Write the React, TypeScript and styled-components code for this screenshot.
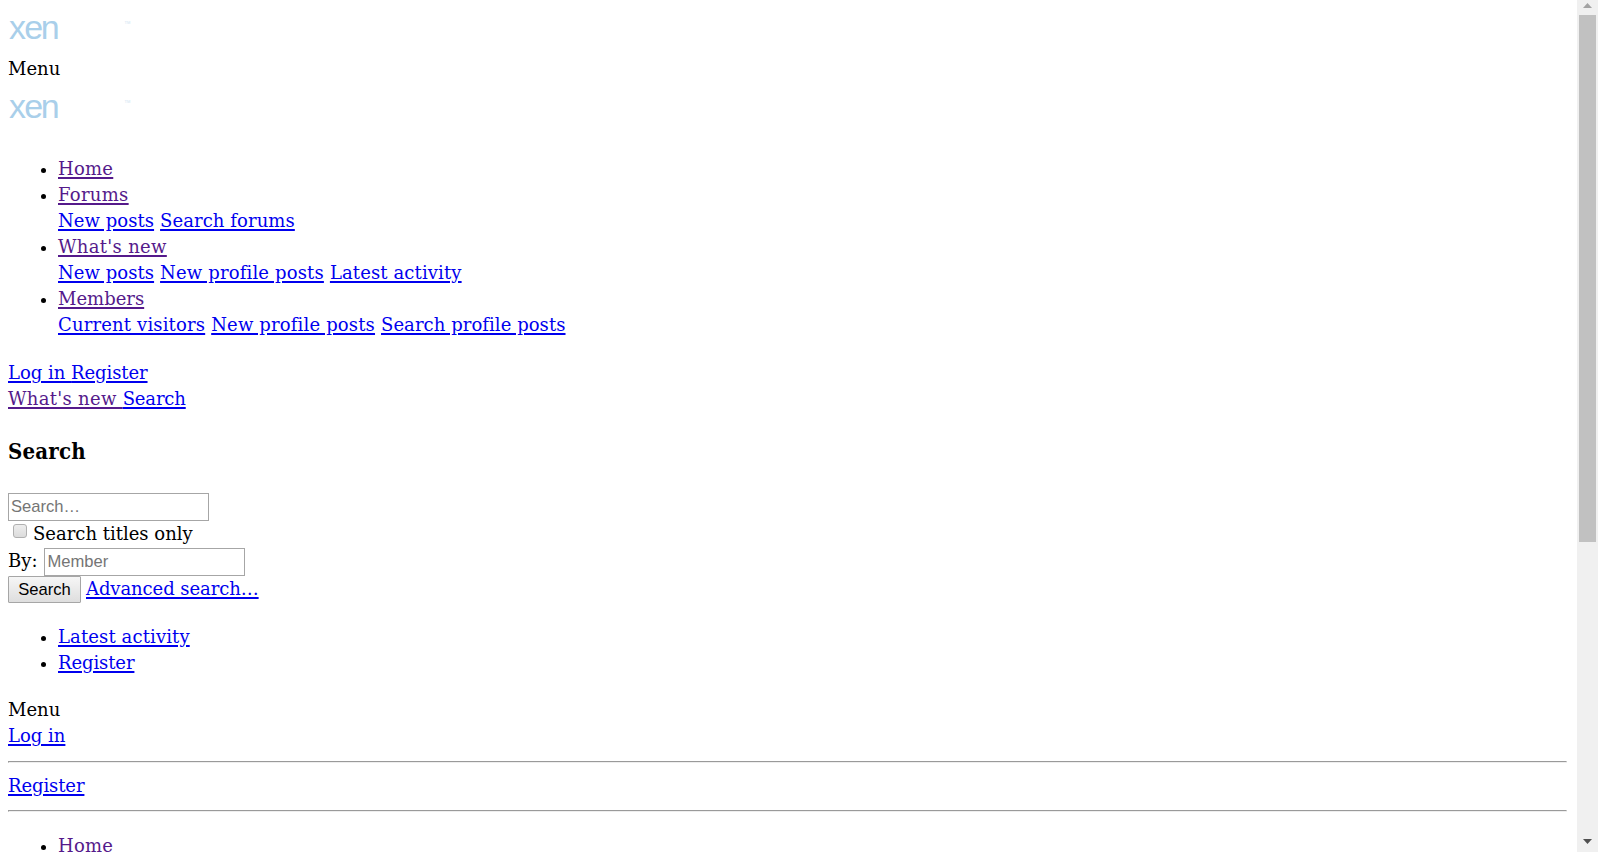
import styled, {createGlobalStyle} from "styled-components";

interface ILink {
    text: string
    visited?: boolean
    tracking?: number
}

const navItems: { title: ILink, links: ILink[] }[] = [
    {title: {text: 'Home', visited: true, tracking: 0.25}, links: []},
    {
        title: {text: 'Forums', visited: true, tracking: 0.3},
        links: [{text: 'New posts', tracking: 0.05}, {text: 'Search forums', tracking: 0.08}]
    },
    {
        title: {text: "What's new", visited: true, tracking: 0.32},
        links: [
            {text: 'New posts', tracking: 0.05},
            {text: 'New profile posts', tracking: 0.16},
            {text: 'Latest activity', tracking: 0.12}
        ]
    },
    {
        title: {text: 'Members', visited: true},
        links: [
            {text: 'Current visitors', tracking: 0.16},
            {text: 'New profile posts', tracking: 0.16},
            {text: 'Search profile posts', tracking: 0.06}
        ]
    },
]

const Link = ({text, visited, tracking}: ILink) =>
    <SLink href={'#'} $visited={visited} $tracking={tracking}>{text}</SLink>

const Logo = () => <SLogo viewBox={'0 0 130 44'}>
    <text x={'1 16.2 32.8'} y={31} fontSize={34}>xen</text>
    <text x={116.5} y={16} fontSize={4} opacity={0.6}>TM</text>
</SLogo>

const App = () => {
    return <SPage>
        <GlobalStyle/>
        <SContent>
            <SLogoBox $height={48}><Logo/></SLogoBox>
            <SLine>Menu</SLine>
            <SLogoBox $height={54} $top={5}><Logo/></SLogoBox>

            <SList $top={20} $bottom={22}>
                {navItems.map(({title, links}) => <SItem key={title.text}>
                    <Link {...title}/>
                    {links.length > 0 && <SLine>
                        {links.map(link => <Link key={link.text} {...link}/>)}
                    </SLine>}
                </SItem>)}
            </SList>

            <SLine $tight><Link text={'Log in\u00a0'}/><Link text={'Register'} tracking={-0.1}/></SLine>
            <SLine $tight>
                <Link text={"What's new\u00a0"} visited tracking={0.3}/>
                <Link text={'Search'} tracking={-0.15}/>
            </SLine>

            <STitle>Search</STitle>
            <SInput placeholder={'Search…'}/>
            <SCheckRow><SCheckbox/>Search titles only</SCheckRow>
            <SFormRow $gap={7}>By:<SInput placeholder={'Member'}/></SFormRow>
            <SFormRow $gap={5}><SButton>Search</SButton><Link text={'Advanced search…'} tracking={-0.08}/></SFormRow>

            <SList $top={20} $bottom={21}>
                <SItem><Link text={'Latest activity'} tracking={0.12}/></SItem>
                <SItem><Link text={'Register'} tracking={-0.1}/></SItem>
            </SList>

            <SLine>Menu</SLine>
            <SLine><Link text={'Log in'}/></SLine>
            <SRule $top={12} $bottom={10}/>
            <SLine><Link text={'Register'} tracking={-0.1}/></SLine>
            <SRule $top={11} $bottom={11}/>
            <SList $top={21} $bottom={0}>
                <SItem><Link text={'Home'} visited tracking={0.25}/></SItem>
            </SList>
        </SContent>
        <SScrollbar>
            <SArrow viewBox={'0 0 9 5'} $color={'#a3a3a3'}><path d={'M0 5L4.5 0L9 5Z'}/></SArrow>
            <SThumb/>
            <SArrow viewBox={'0 0 9 5'} $color={'#505050'}><path d={'M0 0L4.5 5L9 0Z'}/></SArrow>
        </SScrollbar>
    </SPage>
}

const GlobalStyle = createGlobalStyle`
  * {
    box-sizing: border-box;
  }

  body {
    margin: 0;
    overflow: hidden;
    background-color: white;
  }
`

const SPage = styled.main`
  display: flex;
  height: 852px;
  overflow: hidden;
  color: black;
  font-family: 'DejaVu Serif', serif;
  font-size: 18px;
  line-height: 26px;
`

const SContent = styled.section`
  flex: 1;
  padding: 8px 10px 0 8px;
`

const SLogoBox = styled.div<{ $height: number, $top?: number }>`
  height: ${({$height}) => $height}px;
  padding-top: ${({$top = 0}) => $top}px;
`

const SLogo = styled.svg`
  display: block;
  width: 130px;
  height: 44px;
  fill: #a9cfea;
  font-family: 'Liberation Sans', sans-serif;
`

const SLine = styled.div<{ $tight?: boolean }>`
  display: flex;
  gap: ${({$tight}) => $tight ? 0 : 6}px;
  height: 26px;
  white-space: nowrap;
`

const SLink = styled.a<{ $visited?: boolean, $tracking?: number }>`
  color: ${({$visited}) => $visited ? '#551a8b' : '#0000ee'};
  letter-spacing: ${({$tracking = 0}) => $tracking}px;
  text-decoration: underline;
  text-decoration-thickness: 2px;
  text-underline-offset: 2px;
`

const SList = styled.ul<{ $top: number, $bottom: number }>`
  margin: ${({$top}) => $top}px 0 ${({$bottom}) => $bottom}px;
  padding-left: 50px;
  list-style: none;
`

const SItem = styled.li`
  position: relative;

  &::before {
    content: '';
    position: absolute;
    top: 12px;
    left: -17px;
    width: 5px;
    height: 5px;
    border-radius: 100%;
    background-color: black;
  }
`

const STitle = styled.h3`
  height: 81px;
  margin: 0;
  padding-top: 24px;
  font-family: 'DejaVu Serif Condensed', 'DejaVu Serif', serif;
  font-stretch: condensed;
  font-size: 22px;
  line-height: 30px;
  letter-spacing: 0.2px;
`

const SInput = styled.input`
  display: block;
  width: 201px;
  height: 28px;
  padding: 1px 2px;
  border: 1px solid #a6a6a6;
  border-radius: 0;
  background-color: white;
  font: 16.6px 'Liberation Sans', sans-serif;

  &::placeholder {
    color: #757575;
  }
`

const SCheckRow = styled.label`
  display: flex;
  align-items: flex-start;
  gap: 6px;
  height: 27px;
  padding-left: 5px;
`

const SCheckbox = styled.input.attrs({type: 'checkbox'})`
  appearance: none;
  width: 14px;
  height: 14px;
  margin: 3px 0 0;
  border: 1px solid #b0b0b0;
  border-radius: 3px;
  background: linear-gradient(#ededed, #dcdcdc);
`

const SFormRow = styled.div<{ $gap: number }>`
  display: flex;
  gap: ${({$gap}) => $gap}px;
  height: 28px;
`

const SButton = styled.button`
  width: 73px;
  height: 27px;
  padding: 0;
  border: 1px solid #a6a6a6;
  border-radius: 1px;
  background: linear-gradient(#f6f6f6, #dedede);
  color: black;
  font: 16.6px 'Liberation Sans', sans-serif;
`

const SRule = styled.hr<{ $top: number, $bottom: number }>`
  height: 2px;
  margin: ${({$top}) => $top}px 0 ${({$bottom}) => $bottom}px;
  border: 1px inset #eeeeee;
`

const SScrollbar = styled.aside`
  display: flex;
  flex-direction: column;
  align-items: center;
  width: 21px;
  padding: 3px 0 8px;
  background-color: #f0f0f0;
`

const SThumb = styled.div`
  width: 17px;
  height: 527px;
  margin: 7px 0 auto;
  background-color: #c1c1c1;
`

const SArrow = styled.svg<{ $color: string }>`
  width: 9px;
  height: 5px;
  fill: ${({$color}) => $color};
`

export default App
